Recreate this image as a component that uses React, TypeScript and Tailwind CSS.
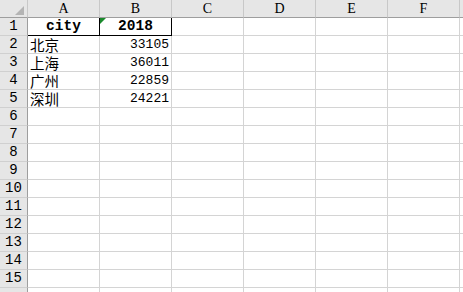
import React from "react";

const cols = ["A", "B", "C", "D", "E", "F"];

const data: [string, string][] = [
  ["北京", "33105"],
  ["上海", "36011"],
  ["广州", "22859"],
  ["深圳", "24221"],
];

const cjk = "font-['SimSun','Noto_Sans_CJK_SC',sans-serif]";
const mono = "font-['Liberation_Mono',monospace]";

function RowHead({ n }: { n?: number }) {
  return (
    <div
      className={`h-[18px] bg-[#e6e6e6] border-r border-b border-r-[#9e9e9e] border-b-[#d0d0d0] flex items-center justify-center text-[14px] leading-[17px] text-black ${mono}`}
    >
      {n}
    </div>
  );
}

function Cell({
  children,
  className = "",
}: {
  children?: React.ReactNode;
  className?: string;
}) {
  return (
    <div
      className={`h-[18px] border-r border-b border-[#d4d4d4] flex items-center px-[2px] text-black leading-[17px] whitespace-nowrap ${className}`}
    >
      {children}
    </div>
  );
}

export default function App() {
  const rows = Array.from({ length: 16 }, (_, i) => i + 1);

  return (
    <div className="w-[463px] h-[292px] overflow-hidden bg-white">
      <div className="grid grid-cols-[28px_repeat(6,72px)_1fr]">
        {/* header row */}
        <div className="h-[18px] bg-[#e6e6e6] border-r border-b border-r-[#c8c8c8] border-b-[#9e9e9e] relative">
          <div className="absolute left-[15px] top-[6px] w-0 h-0 border-l-[9px] border-l-transparent border-b-[9px] border-b-[#b4b4b4]" />
        </div>
        {cols.map((c) => (
          <div
            key={c}
            className="h-[18px] bg-[#e6e6e6] border-r border-b border-r-[#c8c8c8] border-b-[#9e9e9e] flex items-center justify-center text-[14px] leading-[17px] text-black font-['Liberation_Serif',serif]"
          >
            {c}
          </div>
        ))}
        <div className="h-[18px] bg-[#e6e6e6] border-b border-b-[#9e9e9e]" />

        {rows.map((r) => {
          const rec = r >= 2 && r <= 5 ? data[r - 2] : null;
          return (
            <React.Fragment key={r}>
              {/* row 16 is only a sliver at the bottom edge */}
              <RowHead n={r < 16 ? r : undefined} />
              {r === 1 ? (
                <>
                  <Cell className={`justify-center border-r-black border-b-black font-bold text-[14.5px] ${mono}`}>
                    city
                  </Cell>
                  <Cell className={`relative justify-center border-r-black border-b-black font-bold text-[14.5px] ${mono}`}>
                    <span className="absolute left-0 top-0 w-0 h-0 border-t-[6px] border-t-[#1a8a2c] border-r-[6px] border-r-transparent" />
                    2018
                  </Cell>
                </>
              ) : (
                <>
                  <Cell className={`text-[14.5px] leading-[14px] ${cjk}`}>{rec ? rec[0] : ""}</Cell>
                  <Cell className={`justify-end text-[13px] ${mono}`}>
                    {rec ? rec[1] : ""}
                  </Cell>
                </>
              )}
              <Cell />
              <Cell />
              <Cell />
              <Cell />
              <div className="h-[18px] border-b border-[#d4d4d4]" />
            </React.Fragment>
          );
        })}
      </div>
    </div>
  );
}
